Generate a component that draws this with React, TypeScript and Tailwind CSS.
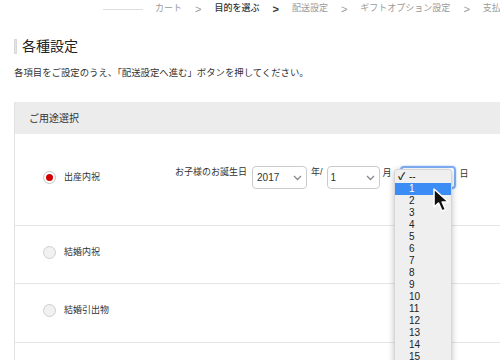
import React from "react";

const FONT = { fontFamily: '"Liberation Sans", "Noto Sans CJK JP", sans-serif' };

function Chevron({ className = "" }: { className?: string }) {
  return (
    <svg width="9" height="6" viewBox="0 0 9 6" className={className}>
      <polyline points="1,1 4.5,4.5 8,1" fill="none" stroke="#8a8a8a" strokeWidth="1.3" />
    </svg>
  );
}

function Radio({ checked }: { checked?: boolean }) {
  return checked ? (
    <div className="w-[13px] h-[13px] rounded-full border border-[#c4c4c4] bg-white flex items-center justify-center shrink-0">
      <div className="w-[7px] h-[7px] rounded-full bg-[#d40000]" />
    </div>
  ) : (
    <div className="w-[13px] h-[13px] rounded-full border border-[#cfcfcf] bg-[#f1f1f1] shrink-0" />
  );
}

export default function App() {
  const nums = Array.from({ length: 15 }, (_, i) => i + 1);
  return (
    <div className="relative w-[500px] h-[360px] overflow-hidden bg-white text-[#333]" style={FONT}>
      {/* breadcrumb */}
      <div className="flex items-center h-[18px] pl-[103px] whitespace-nowrap text-[9px] text-[#9a9a9a]">
        <div className="w-[40px] h-px bg-[#dcdcdc] mr-[12px] shrink-0" />
        <span className="shrink-0">カート</span>
        <span className="mx-[13px] text-[11px] shrink-0">&gt;</span>
        <span className="text-[#333] font-medium shrink-0">目的を選ぶ</span>
        <span className="mx-[13px] text-[11px] text-[#333] font-bold shrink-0">&gt;</span>
        <span className="shrink-0">配送設定</span>
        <span className="mx-[13px] text-[11px] shrink-0">&gt;</span>
        <span className="shrink-0">ギフトオプション設定</span>
        <span className="mx-[13px] text-[11px] shrink-0">&gt;</span>
        <span className="shrink-0">支払</span>
      </div>

      {/* title */}
      <div className="flex items-center pl-[14px] mt-[19px] h-[18px]">
        <div className="w-[3px] h-[15px] bg-[#e4e4e4] border border-[#d8d8d8]" />
        <div className="ml-[5px] text-[14px] text-[#222]">各種設定</div>
      </div>

      <div className="pl-[14px] mt-[12px] text-[9.4px] leading-[12px] whitespace-nowrap">
        各項目をご設定のうえ、「配送設定へ進む」ボタンを押してください。
      </div>

      {/* section */}
      <div className="ml-[14px] mt-[23px] border-l border-[#e2e2e2]">
        <div className="h-[32px] bg-[#ececec] flex items-center pl-[14px] text-[10px]">ご用途選択</div>

        <div className="h-[92px] border-b border-[#e6e6e6] pt-[32px] pl-[28px] flex items-start">
          <div className="flex items-center h-[23px]">
            <Radio checked />
            <span className="ml-[8px] w-[111px] text-[9px]">出産内祝</span>
            <span className="text-[9px] mr-[5px] -mt-[10px]">お子様のお誕生日</span>
            <div className="w-[55px] h-[23px] rounded-[4px] border border-[#cbcbcb] flex items-center justify-between pl-[4px] pr-[4px] text-[10px]">
              <span>2017</span>
              <Chevron />
            </div>
            <span className="ml-[4px] mr-[4px] text-[9px] -mt-[9px]">年/</span>
            <div className="w-[53px] h-[23px] rounded-[4px] border border-[#cbcbcb] flex items-center justify-between pl-[3px] pr-[4px] text-[10px]">
              <span>1</span>
              <Chevron />
            </div>
            <span className="ml-[3px] mr-[8px] text-[9px] -mt-[8px]">月</span>
            <div className="w-[56px] h-[23px] rounded-[4px] border-2 border-[#7eaef5] shadow-[0_0_2px_#9ec4fa] flex items-center justify-end pr-[2px]">
              <Chevron />
            </div>
            <span className="ml-[4px] text-[9px] -mt-[6px]">日</span>
          </div>
        </div>

        <div className="h-[58px] border-b border-[#e6e6e6] pt-[20px] pl-[28px] flex items-start">
          <div className="flex items-center h-[13px]">
            <Radio />
            <span className="ml-[8px] text-[9px]">結婚内祝</span>
          </div>
        </div>

        <div className="h-[59px] border-b border-[#e6e6e6] pt-[20px] pl-[28px] flex items-start">
          <div className="flex items-center h-[13px]">
            <Radio />
            <span className="ml-[8px] text-[9px]">結婚引出物</span>
          </div>
        </div>
        <div className="h-[30px]" />
      </div>

      {/* dropdown menu */}
      <div className="absolute left-[394px] top-[169px] w-[58px] h-[220px] bg-[#efefef] border border-[#d6d6d6] shadow-[0_2px_6px_rgba(0,0,0,0.25)] rounded-[3px] pt-[1px] text-[10px] font-medium text-[#222]">
        <div className="h-[12px] flex items-center leading-none">
          <span className="w-[14px] pl-[3px] text-[10px] font-bold">✓</span>
          <span>--</span>
        </div>
        {nums.map((n) => (
          <div
            key={n}
            className={
              "h-[12px] flex items-center pl-[14px] leading-none " +
              (n === 1 ? "bg-[#3b8cf5] text-white" : "")
            }
          >
            {n}
          </div>
        ))}
      </div>

      {/* cursor */}
      <svg className="absolute left-[432px] top-[187px]" width="22" height="27" viewBox="0 0 22 27">
        <path
          d="M2,2 L2,20 L6.5,16 L10,24 L13.5,22.5 L10.2,15 L16.5,15 Z"
          fill="#111"
          stroke="#fff"
          strokeWidth="1.6"
          strokeLinejoin="round"
        />
      </svg>
    </div>
  );
}
